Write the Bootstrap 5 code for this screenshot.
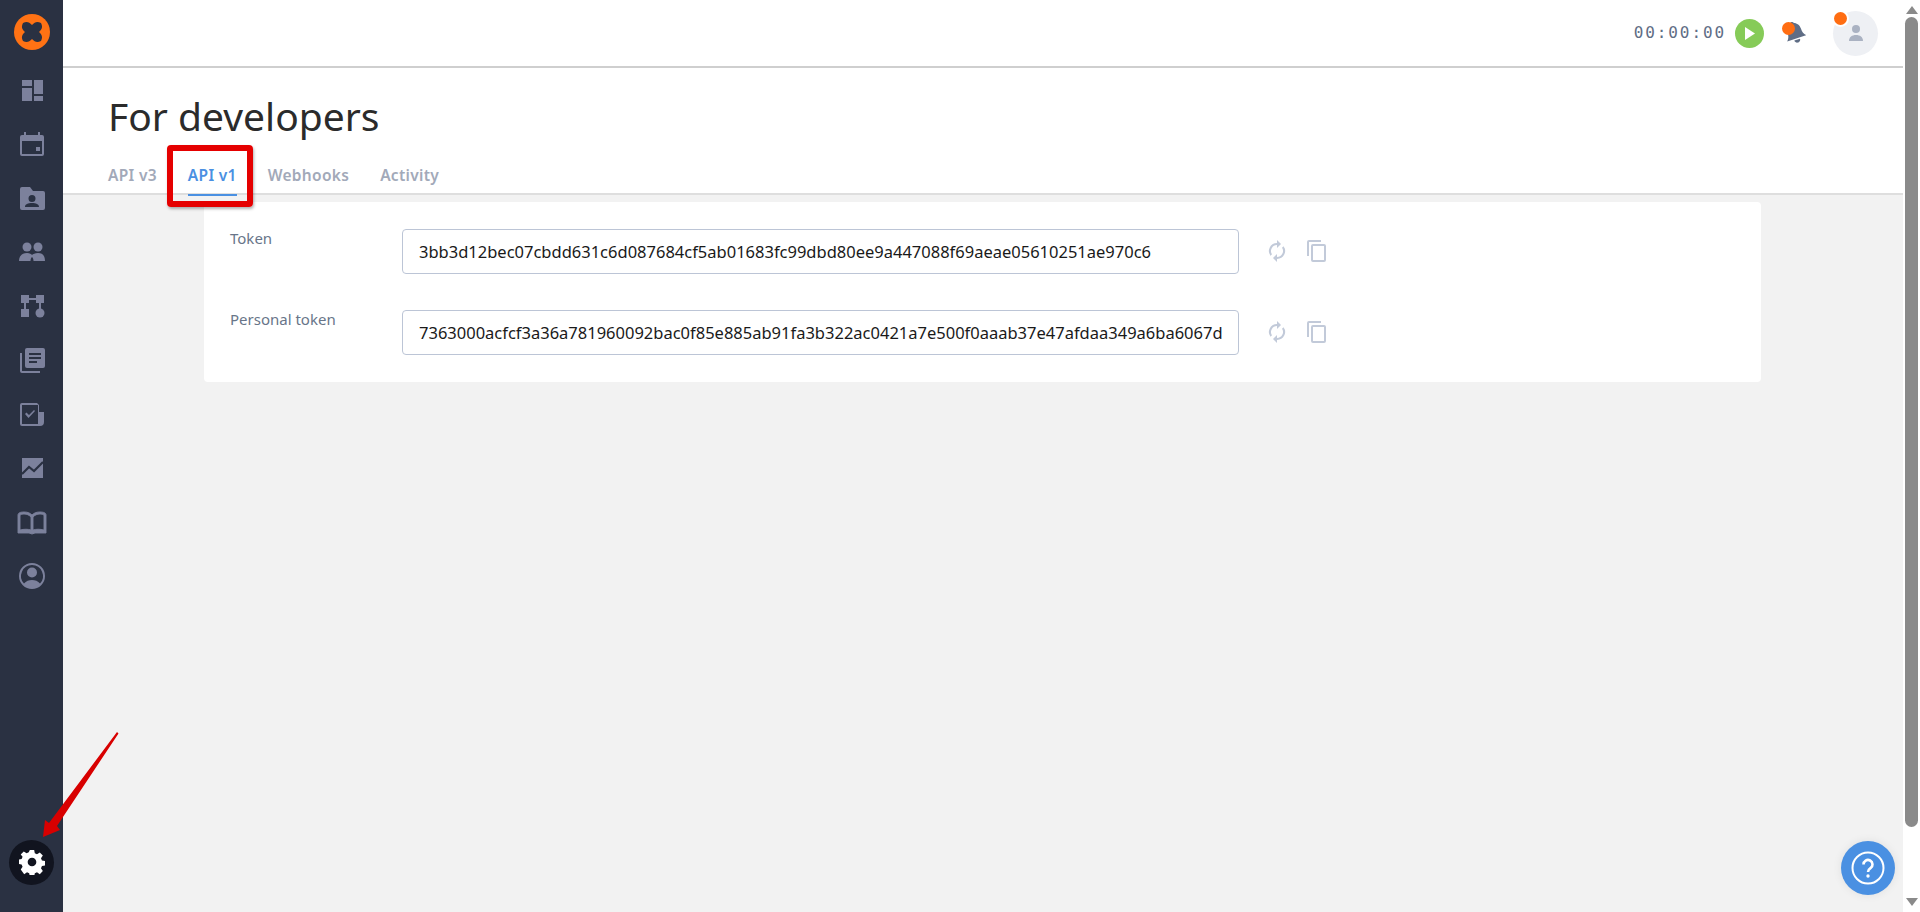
<!DOCTYPE html>
<html lang="en"><head><meta charset="utf-8"><title>For developers</title>
<link href="https://cdn.jsdelivr.net/npm/bootstrap@5.3.0/dist/css/bootstrap.min.css" rel="stylesheet">
<style>
html,body{height:912px;overflow:hidden}
body{font-family:"Noto Sans","Open Sans",sans-serif;background:#f2f2f2;position:relative}
.shell{height:912px}
.side{width:63px;background:#2a3142;flex:none;padding-top:10px}
.side-ico{height:54px;width:63px}
.side-ico svg{width:30px;height:30px;fill:#7c819c}
.logo{height:44px;margin-bottom:9px}
.logo svg{width:36px;height:36px}
.gear-wrap{margin-top:auto;height:50px;margin-bottom:25px}
.gear{width:45px;height:45px;border-radius:50%;background:#11141f}
.gear svg{width:26px;height:26px;fill:#fff}
.mainp{min-width:0}
.topb{height:68px;background:#fff;border-bottom:2px solid #cfcfcf;padding-right:25px}
.timer{font-family:"DejaVu Sans Mono",monospace;font-size:16px;color:#5f6d85;letter-spacing:1.900px;margin-right:9px}
.play{width:29px;height:29px;border-radius:50%;background:#86cb58;margin-right:18px}
.bellw{position:relative;width:24px;height:26px;margin-right:27px}
.bellw svg{width:24px;height:26px;display:block}
.dot-o{position:absolute;width:13px;height:13px;background:#ff6d12;border-radius:50%}
.dot-bell{left:0;top:2px}
.ava{width:45px;height:45px;border-radius:50%;background:#eef0f4;position:relative}
.ava svg{width:22px;height:22px;fill:#aab2c2}
.dot-ava{left:1px;top:1px;box-shadow:0 0 0 2px #fff}
.headp{background:#fff;border-bottom:2px solid #dedede;height:127px;padding:0 0 0 45px}
.ptitle{font-size:39px;font-weight:400;color:#2b2b2b;letter-spacing:0;line-height:1;margin:28px 0 0}
.tabsx{gap:31px;margin-top:28px}
.tabx{font-size:15.5px;font-weight:600;color:#a2a9b9;letter-spacing:.3px;height:33px;line-height:24px;text-decoration:none;display:block;border-bottom:2px solid transparent}
.tabx.on{color:#4a90e2;border-bottom-color:#4a90e2}
.tokcard{margin:7px 0 0 141px;width:1557px;height:180px;background:#fff;border-radius:4px;padding:27px 26px 0}
.tokrow{height:81px}
.toklab{width:172px;font-size:15px;color:#687589;line-height:18px}
.tokin{width:837px;height:45px;border:1px solid #bcc5d6;border-radius:4px;font-size:16.5px;color:#1a1a1a;font-family:"Noto Sans",sans-serif;padding:0 16px;background:#fff;white-space:nowrap;overflow:hidden;line-height:43px}
.acts{gap:16px;margin-left:26px;height:43px}
.acts svg{width:24px;height:24px;fill:#c2cad9}
.sbar{width:17px;flex:none;background:#fff}
.sb-up,.sb-dn{width:0;height:0;border-left:6px solid transparent;border-right:6px solid transparent;margin:6px auto 0}
.sb-up{border-bottom:8px solid #8a8a8a}
.sb-dn{border-top:8px solid #8a8a8a;margin:0 auto 6px}
.sb-th{width:13px;height:810px;background:#8a8a8a;border-radius:7px;margin:3px auto 0}
.helpb{position:absolute;left:1841px;top:841px;width:54px;height:54px;border-radius:50%;background:#4a90e2;box-shadow:0 0 10px rgba(0,0,0,.08)}
.helpb svg{width:36px;height:36px}
.hl-box{position:absolute;left:167px;top:145px;width:86px;height:62px;border:6px solid #e50000;border-radius:4px;box-shadow:1px 2px 3px rgba(0,0,0,.3)}
.arrow{position:absolute;left:30px;top:725px;width:100px;height:130px}
.side-ico .ico-book{stroke:#7c819c;stroke-width:.9}
</style></head><body>
<div class="shell d-flex">
 <nav class="side d-flex flex-column align-items-center">
  <div class="logo d-flex align-items-center justify-content-center"><svg viewBox="0 0 36 36"><circle cx="18" cy="18" r="18" fill="#ff7214"/><path fill="#2a3142" d="M9 9c4-2 6-1 9 2 3-3 5-4 9-2 2 4 1 6-2 9 3 3 4 5 2 9-4 2-6 1-9-2-3 3-5 4-9 2-2-4-1-6 2-9-3-3-4-5-2-9z"/></svg></div>
  <div class="side-ico d-flex align-items-center justify-content-center"><svg viewBox="0 0 30 30"><path d="M5 5h10v6H5zM17 5h9v14h-9zM5 13h10v13H5zM17 21h9v5h-9z"/></svg></div>
  <div class="side-ico d-flex align-items-center justify-content-center"><svg viewBox="0 0 30 30"><path fill-rule="evenodd" d="M7 3h2v3h12V3h2v3h2a2 2 0 0 1 2 2v17a2 2 0 0 1-2 2H5a2 2 0 0 1-2-2V8a2 2 0 0 1 2-2h2zM5 12v13h20V12zm14 6h4v4h-4z"/></svg></div>
  <div class="side-ico d-flex align-items-center justify-content-center"><svg viewBox="0 0 30 30"><path fill-rule="evenodd" d="M5 4h8l3 4h10a2 2 0 0 1 2 2v15a2 2 0 0 1-2 2H5a2 2 0 0 1-2-2V6a2 2 0 0 1 2-2zm10 8a3.500 3.500 0 1 0 0 7 3.500 3.500 0 0 0 0-7zm-7 12h14c0-3-3-4-7-4s-7 1-7 4z"/></svg></div>
  <div class="side-ico d-flex align-items-center justify-content-center"><svg viewBox="0 0 30 30"><circle cx="10" cy="10" r="4.500"/><circle cx="21" cy="10" r="4.500"/><path d="M2 24c0-5 3-8 8-8 3 0 4 1 5 2 1-1 3-2 6-2 5 0 7 3 7 8H16.500c0-2-.5-3-1.500-4-1 1-1.500 2-1.500 4z"/></svg></div>
  <div class="side-ico d-flex align-items-center justify-content-center"><svg viewBox="0 0 30 30"><path d="M4 4h8v8H4zM19 4h8v8h-8zM12 7h7v2h-7zM7 12h2v6H7zM4 18h8v8H4z"/><circle cx="23" cy="22" r="4.500"/><path d="M22 12h2v6h-2z"/></svg></div>
  <div class="side-ico d-flex align-items-center justify-content-center"><svg viewBox="0 0 30 30"><path fill-rule="evenodd" d="M10 3h16a2 2 0 0 1 2 2v16a2 2 0 0 1-2 2H10a2 2 0 0 1-2-2V5a2 2 0 0 1 2-2zm2 5v2h12V8zm0 4v2h12v-2zm0 4v2h8v-2z"/><path d="M3 8h2v18h18v2H5a2 2 0 0 1-2-2z"/></svg></div>
  <div class="side-ico d-flex align-items-center justify-content-center"><svg viewBox="0 0 30 30"><path fill-rule="evenodd" d="M5 4h15l2 2v7h5v10a4 4 0 0 1-4 4H5a2 2 0 0 1-2-2V6a2 2 0 0 1 2-2zm0 2v19h16V6zm3 9 1.500-1.500 2.500 2.500 5-5L18 12l-6.500 7z"/></svg></div>
  <div class="side-ico d-flex align-items-center justify-content-center"><svg viewBox="0 0 30 30"><path d="M5 5h21v20H5z"/><path d="M5 21l7-7 5 4 9-9" fill="none" stroke="#2a3142" stroke-width="2.200"/></svg></div>
  <div class="side-ico d-flex align-items-center justify-content-center"><svg viewBox="0 0 30 30"><path class="ico-book" fill-rule="evenodd" d="M1 26V8c0-2 2-3 6-3 4 0 6 1 8 3 2-2 4-3 8-3s6 1 6 3v18H18l-3 1-3-1zM3 23V8c1-.7 2.500-1 4-1 3 0 5 1 7 3v13c-3-1-7-1-11 0zm13 0V10c2-2 4-3 7-3 1.500 0 3 .3 4 1v15c-4-1-8-1-11 0z"/></svg></div>
  <div class="side-ico d-flex align-items-center justify-content-center"><svg viewBox="0 0 30 30"><path fill-rule="evenodd" d="M15 2a13 13 0 1 1 0 26 13 13 0 0 1 0-26zm0 2a11 11 0 0 0-8 18.500C9 20 12 19 15 19s6 1 8 3.500A11 11 0 0 0 15 4zm0 2.500a5 5 0 1 1 0 10 5 5 0 0 1 0-10z"/></svg></div>
  <div class="gear-wrap d-flex align-items-center justify-content-center"><div class="gear d-flex align-items-center justify-content-center"><svg viewBox="0 0 24 24"><path fill-rule="evenodd" d="M10 1h4l.6 3 2 .9 2.600-1.700 2.800 2.800-1.700 2.600.9 2 3 .6v4l-3 .6-.9 2 1.700 2.600-2.800 2.800-2.600-1.700-2 .9-.6 3h-4l-.6-3-2-.9-2.600 1.700L1.600 19l1.700-2.600-.9-2-3-.6v-4l3-.6.9-2L1.600 5l2.800-2.800L7 3.900l2-.9zM12 8a4 4 0 1 0 0 8 4 4 0 0 0 0-8z"/></svg></div></div>
 </nav>
 <div class="mainp flex-grow-1 d-flex flex-column">
  <header class="topb d-flex align-items-center justify-content-end">
   <span class="timer">00:00:00</span>
   <span class="play d-flex align-items-center justify-content-center"><svg width="13" height="15" viewBox="0 0 13 15"><path d="M2 1l10 6.500L2 14z" fill="#fff"/></svg></span>
   <span class="bellw"><svg viewBox="0 0 24 26"><g fill="#5f6d85" transform="rotate(-18 13 13)"><path d="M13 1.500c1 0 1.800.6 2 1.600 3 1 5 4 5 7.500 0 4 1 6 3 8H3c2-2 3-4 3-8 0-3.500 2-6.500 5-7.500.2-1 1-1.600 2-1.600z"/><path d="M10 20h6c0 4-6 4-6 0z"/></g></svg><i class="dot-o dot-bell"></i></span>
   <span class="ava d-flex align-items-center justify-content-center"><svg viewBox="0 0 22 22"><circle cx="11" cy="7" r="4"/><path d="M4 19c0-4 3-6 7-6s7 2 7 6z"/></svg><i class="dot-o dot-ava"></i></span>
  </header>
  <section class="headp">
   <h1 class="ptitle">For developers</h1>
   <div class="tabsx d-flex">
    <a class="tabx" href="#">API v3</a><a class="tabx on" href="#">API v1</a><a class="tabx" href="#">Webhooks</a><a class="tabx" href="#">Activity</a>
   </div>
  </section>
  <section class="tokcard">
   <div class="tokrow d-flex align-items-start">
    <div class="toklab">Token</div>
    <div class="tokin">3bb3d12bec07cbdd631c6d087684cf5ab01683fc99dbd80ee9a447088f69aeae05610251ae970c6</div>
    <div class="acts d-flex align-items-center">
     <svg viewBox="0 0 24 24"><path d="M12 4V1l4 4-4 4V6a6 6 0 0 0-5 9.300L5.500 16.800A8 8 0 0 1 12 4zm6.500 3.200A8 8 0 0 1 12 20v3l-4-4 4-4v3a6 6 0 0 0 5-9.300z"/></svg>
     <svg viewBox="0 0 24 24"><path fill-rule="evenodd" d="M16 1H4a2 2 0 0 0-2 2v14h2V3h12zM19 5H8a2 2 0 0 0-2 2v14a2 2 0 0 0 2 2h11a2 2 0 0 0 2-2V7a2 2 0 0 0-2-2zm0 16H8V7h11z"/></svg>
    </div>
   </div>
   <div class="tokrow d-flex align-items-start">
    <div class="toklab">Personal token</div>
    <div class="tokin">7363000acfcf3a36a781960092bac0f85e885ab91fa3b322ac0421a7e500f0aaab37e47afdaa349a6ba6067d</div>
    <div class="acts d-flex align-items-center">
     <svg viewBox="0 0 24 24"><path d="M12 4V1l4 4-4 4V6a6 6 0 0 0-5 9.300L5.500 16.800A8 8 0 0 1 12 4zm6.500 3.200A8 8 0 0 1 12 20v3l-4-4 4-4v3a6 6 0 0 0 5-9.300z"/></svg>
     <svg viewBox="0 0 24 24"><path fill-rule="evenodd" d="M16 1H4a2 2 0 0 0-2 2v14h2V3h12zM19 5H8a2 2 0 0 0-2 2v14a2 2 0 0 0 2 2h11a2 2 0 0 0 2-2V7a2 2 0 0 0-2-2zm0 16H8V7h11z"/></svg>
    </div>
   </div>
  </section>
 </div>
 <aside class="sbar d-flex flex-column">
  <div class="sb-up"></div><div class="sb-th"></div><div class="sb-dn mt-auto"></div>
 </aside>
</div>
<div class="hl-box"></div>
<svg class="arrow" viewBox="0 0 100 130"><path fill="#d80000" d="M87 7 88.500 8.500 27 101 30 105 13 112 15 95 19 98Z"/></svg>
<a class="helpb d-flex align-items-center justify-content-center" href="#"><svg viewBox="0 0 36 36"><circle cx="18" cy="18" r="15.500" fill="none" stroke="#fff" stroke-width="2"/><path d="M13.500 14.500a4.500 4.500 0 1 1 7 3.700c-1.500 1-2.500 1.800-2.500 3.800" fill="none" stroke="#fff" stroke-width="2.600"/><circle cx="18" cy="26" r="1.700" fill="#fff"/></svg></a>
</body></html>
